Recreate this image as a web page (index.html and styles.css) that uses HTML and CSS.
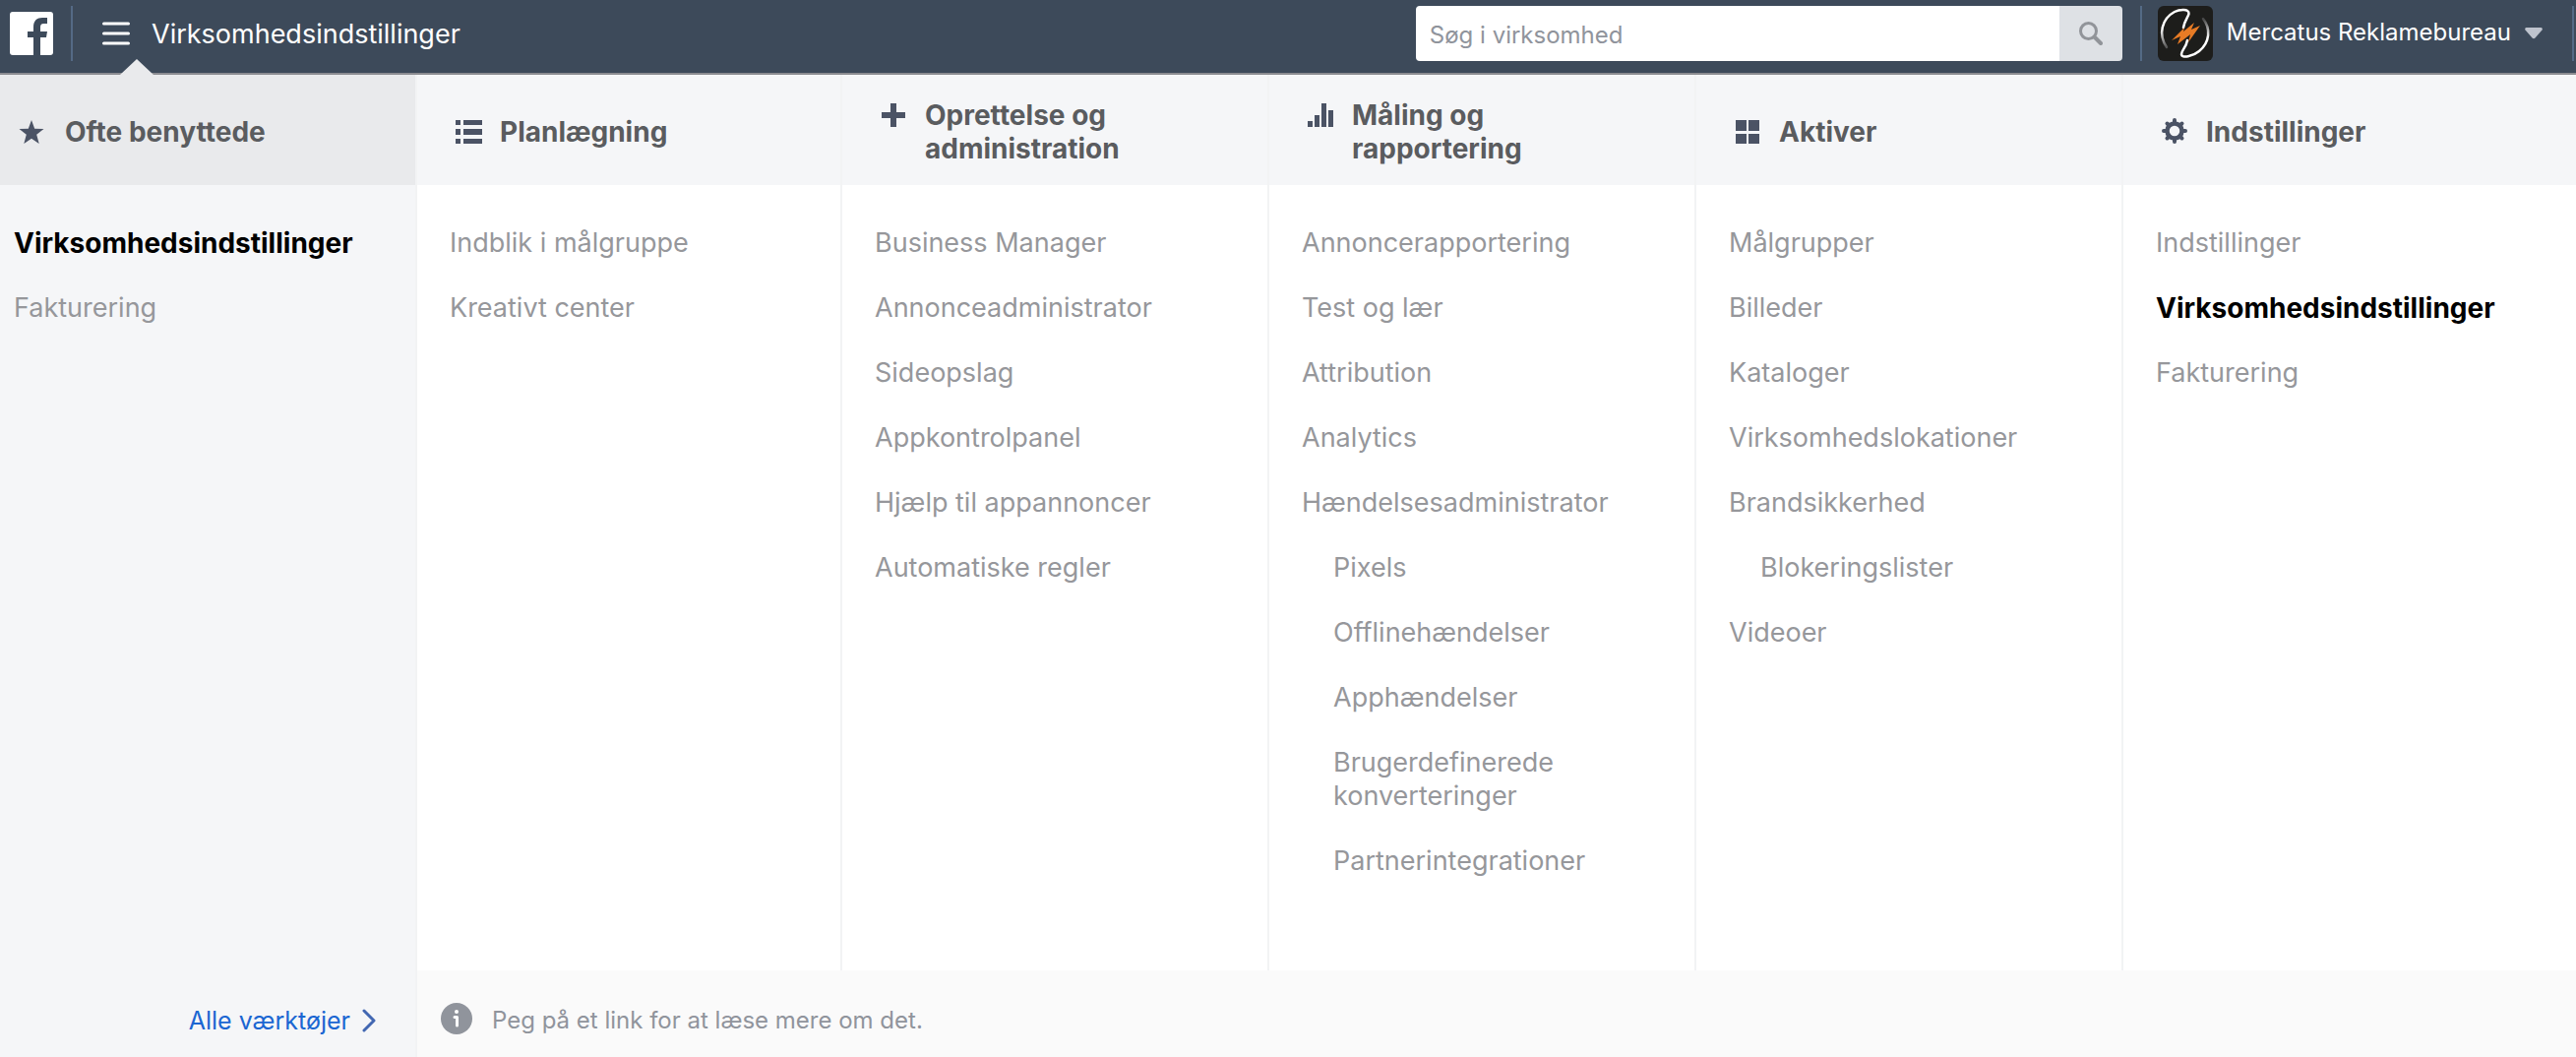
FILE: index.html
```html
<!DOCTYPE html>
<html lang="da">
<head>
    <meta charset="UTF-8" />
    <title>Virksomhedsindstillinger</title>
    <link rel="stylesheet" href="styles.css">
</head>
<body>

    <header class="topbar">
        <a href="#" class="logo" aria-label="Facebook">
            <svg width="44" height="44" viewBox="0 0 44 44">
                <rect width="44" height="44" rx="3" fill="#fff"/>
                <path d="M24 44V26h-6v-6h6v-4.500C24 9 27.500 6 33 6h5v6h-3.500c-2.800 0-3.500 1.400-3.500 3.700V20h7l-1 6h-6v18z" fill="#3d4a5a"/>
            </svg>
        </a>
        <button type="button" class="menu-button">
            <svg width="28" height="24" viewBox="0 0 28 24" stroke="#fff" stroke-width="3" stroke-linecap="round">
                <path d="M1.500 2h25M1.500 12h25M1.500 22h25"/>
            </svg>
            <span>Virksomhedsindstillinger</span>
        </button>

        <form class="search">
            <input type="text" placeholder="Søg i virksomhed" aria-label="Søg i virksomhed">
            <button type="button" aria-label="Søg">
                <svg width="24" height="24" viewBox="0 0 24 24" fill="none" stroke="#919499" stroke-linecap="round">
                    <circle cx="9.500" cy="9.500" r="8" stroke-width="3"/>
                    <path d="M16 16l6 6" stroke-width="4"/>
                </svg>
            </button>
        </form>

        <button type="button" class="account">
            <svg class="avatar" width="56" height="56" viewBox="0 0 56 56" fill="none" stroke-linecap="round">
                <defs>
                    <linearGradient id="fade-left" x1="0" y1="1" x2="0" y2="0">
                        <stop offset="0" stop-color="#555"/>
                        <stop offset=".5" stop-color="#fff"/>
                    </linearGradient>
                    <linearGradient id="fade-right" x1="0" y1="0" x2="0" y2="1">
                        <stop offset="0" stop-color="#444"/>
                        <stop offset=".5" stop-color="#fff"/>
                    </linearGradient>
                </defs>
                <rect width="56" height="56" rx="6" fill="#1d1d1b"/>
                <path d="M9 42C0 29 4 13 17 6c5-2.500 15-3.500 14.500 2C31 11 27 15 26 22" stroke="url(#fade-left)" stroke-width="2.500"/>
                <path d="M46 13c8 10 7 24-4 33-6 5-18 8-18 3 0-4 5-7 6-14" stroke="url(#fade-right)" stroke-width="2.500"/>
                <path d="M14 35l13-13-1 4 11-9-3 7 9-4-12 17 2-8-13 10 3-8z" fill="#e87b25"/>
            </svg>
            <span>Mercatus Reklamebureau</span>
            <svg width="18" height="12" viewBox="0 0 18 12"><path d="M1.500 0h15q2 .500 1 2.500l-7 8q-1.500 1.500-3 0l-7-8q-1-2 1-2.500z" fill="#bec3cd"/></svg>
        </button>
    </header>

    <main class="menu">
        <!-- Ofte benyttede -->
        <section class="column favorites">
            <h2>
                <svg width="32" height="28" viewBox="0 0 32 28"><path d="M14 2l3.200 8.700 9.300.400-7.300 5.700 2.500 9.200-7.700-5.300L6.300 26l2.500-9.200-7.300-5.700 9.300-.400z" fill="#4b5365"/></svg>
                <span>Ofte benyttede</span>
            </h2>
            <ul>
                <li><a href="#" class="active">Virksomhedsindstillinger</a></li>
                <li><a href="#">Fakturering</a></li>
            </ul>
            <a href="#" class="all-tools">
                <span>Alle værktøjer</span>
                <svg width="14" height="24" viewBox="0 0 14 24" fill="none" stroke="#4267b2" stroke-width="3" stroke-linecap="round" stroke-linejoin="round"><path d="M2 2l10 10L2 22"/></svg>
            </a>
        </section>

        <!-- Planlægning -->
        <section class="column">
            <h2>
                <svg width="32" height="28" viewBox="0 0 32 28" fill="#4b5365"><path d="M3 2h5v5H3zM11 2h19v5H11zM3 11h5v6H3zM11 11h19v6H11zM3 21h5v5H3zM11 21h19v5H11z"/></svg>
                <span>Planlægning</span>
            </h2>
            <ul>
                <li><a href="#">Indblik i målgruppe</a></li>
                <li><a href="#">Kreativt center</a></li>
            </ul>
        </section>

        <!-- Oprettelse og administration -->
        <section class="column">
            <h2>
                <svg width="32" height="28" viewBox="0 0 32 28" fill="#4b5365"><path d="M13 2h6v9h9v6h-9v9h-6v-9H4v-6h9z"/></svg>
                <span>Oprettelse og administration</span>
            </h2>
            <ul>
                <li><a href="#">Business Manager</a></li>
                <li><a href="#">Annonceadministrator</a></li>
                <li><a href="#">Sideopslag</a></li>
                <li><a href="#">Appkontrolpanel</a></li>
                <li><a href="#">Hjælp til appannoncer</a></li>
                <li><a href="#">Automatiske regler</a></li>
            </ul>
        </section>

        <!-- Måling og rapportering -->
        <section class="column">
            <h2>
                <svg width="32" height="28" viewBox="0 0 32 28" fill="#4b5365"><path d="M3 20h5v6H3zM10 14h5v12h-5zM17 2h5v24h-5zM24 9h5v17h-5z"/></svg>
                <span>Måling og rapportering</span>
            </h2>
            <ul>
                <li><a href="#">Annoncerapportering</a></li>
                <li><a href="#">Test og lær</a></li>
                <li><a href="#">Attribution</a></li>
                <li><a href="#">Analytics</a></li>
                <li><a href="#">Hændelsesadministrator</a></li>
                <li class="sub"><a href="#">Pixels</a></li>
                <li class="sub"><a href="#">Offlinehændelser</a></li>
                <li class="sub"><a href="#">Apphændelser</a></li>
                <li class="sub"><a href="#">Brugerdefinerede konverteringer</a></li>
                <li class="sub"><a href="#">Partnerintegrationer</a></li>
            </ul>
        </section>

        <!-- Aktiver -->
        <section class="column">
            <h2>
                <svg width="32" height="28" viewBox="0 0 32 28" fill="#4b5365"><path d="M4 2h11v11H4zM17 2h11v11H17zM4 16h11v10H4zM17 16h11v10H17z"/></svg>
                <span>Aktiver</span>
            </h2>
            <ul>
                <li><a href="#">Målgrupper</a></li>
                <li><a href="#">Billeder</a></li>
                <li><a href="#">Kataloger</a></li>
                <li><a href="#">Virksomhedslokationer</a></li>
                <li><a href="#">Brandsikkerhed</a></li>
                <li class="sub"><a href="#">Blokeringslister</a></li>
                <li><a href="#">Videoer</a></li>
            </ul>
        </section>

        <!-- Indstillinger -->
        <section class="column">
            <h2>
                <svg width="32" height="28" viewBox="0 0 32 28" fill="none" stroke="#4b5365">
                    <circle cx="16" cy="13" r="7.500" stroke-width="4.500"/>
                    <path d="M16 2v3M16 21v3M5 13h3M24 13h3M8.500 5.500l2 2M21.500 18.500l2 2M23.500 5.500l-2 2M10.500 18.500l-2 2" stroke-width="4" stroke-linecap="round"/>
                </svg>
                <span>Indstillinger</span>
            </h2>
            <ul>
                <li><a href="#">Indstillinger</a></li>
                <li><a href="#" class="active">Virksomhedsindstillinger</a></li>
                <li><a href="#">Fakturering</a></li>
            </ul>
        </section>

        <footer class="hint">
            <svg width="32" height="32" viewBox="0 0 32 32">
                <circle cx="16" cy="16" r="16" fill="#90949c"/>
                <circle cx="16" cy="9" r="2" fill="#fff"/>
                <path d="M14 14.500h2.500V23" fill="none" stroke="#fff" stroke-width="3" stroke-linecap="round" stroke-linejoin="round"/>
            </svg>
            <span>Peg på et link for at læse mere om det.</span>
        </footer>
    </main>

</body>
</html>
```

FILE: styles.css
```css
* {
    margin: 0;
    padding: 0;
    box-sizing: border-box;
    font-family: Inter, "Liberation Sans", sans-serif;
}

body {
    display: flex;
    flex-direction: column;
    min-height: 100vh;
    background-color: #fff;
    font-size: 27px;
    line-height: 34px;
}

a {
    text-decoration: none;
}

button {
    border: none;
    background: none;
    cursor: pointer;
}

svg {
    flex-shrink: 0;
}

/* Topbar */
.topbar {
    display: flex;
    height: 76px;
    padding: 6px 2px 12px 10px;
    background-color: #3d4a5a;
    border-bottom: 2px solid #8b8c91;
}

.logo {
    padding: 6px 18px 0 0;
    border-right: 2px solid #546a85;
}

.menu-button {
    position: relative;
    display: flex;
    align-items: center;
    gap: 22px;
    padding-left: 30px;
    color: #fff;
    font-size: 27px;
}

/* Pilen ned mod den åbne menu */
.menu-button::after {
    content: "";
    position: absolute;
    left: 48px;
    bottom: -14px;
    border: 17px solid transparent;
    border-top: none;
    border-bottom: 16px solid #e9eaec;
}

.search {
    display: flex;
    width: 718px;
    margin-left: auto;
    border-radius: 4px;
    overflow: hidden;
}

.search input {
    flex: 1;
    padding: 2px 14px 0;
    border: none;
    outline: none;
    font-size: 24px;
}

.search input::placeholder {
    color: #90949c;
}

.search button {
    display: flex;
    align-items: center;
    justify-content: center;
    width: 64px;
    background-color: #dee1e5;
}

.account {
    display: flex;
    align-items: center;
    margin-left: 18px;
    padding: 0 30px 0 16px;
    border-left: 2px solid #546a85;
    border-right: 2px solid #546a85;
    color: #fff;
    font-size: 24px;
}

.account span {
    margin: 0 14px;
    padding-bottom: 4px;
}

/* Menu */
.menu {
    flex: 1;
    display: grid;
    grid-template-columns: 424px 432fr 434fr 434fr 434fr 460fr;
    grid-template-rows: 1fr 88px;
}

.column {
    border-right: 2px solid #f2f3f4;
}

.column:nth-child(6) {
    border-right: none;
}

/* wrap + align-content centrerer, mens ikonet bliver ved første linje */
.column h2 {
    display: flex;
    flex-wrap: wrap;
    align-items: flex-start;
    align-content: center;
    gap: 16px;
    height: 112px;
    padding: 4px 60px 0 36px;
    background-color: #f5f6f8;
    color: #5a5c5f;
    font-size: 28px;
    font-weight: 700;
}

.column h2 svg {
    margin: 3px 0;
}

.column h2 span {
    flex: 1;
}

.column ul {
    list-style: none;
    padding: 42px 33px 62px;
}

.column li {
    margin-bottom: 32px;
}

.column li.sub {
    padding-left: 32px;
}

.column li a {
    display: block;
    color: #96979b;
}

.column li a.active {
    color: #000;
    font-size: 28px;
    font-weight: 700;
}

/* Venstre kolonne går helt ned forbi hintet */
.favorites {
    grid-row: span 2;
    display: flex;
    flex-direction: column;
    background-color: #f5f6f8;
}

.column.favorites h2 {
    padding-left: 18px;
    padding-right: 18px;
    background-color: #e9eaec;
}

.column.favorites ul {
    flex: 1;
    padding-left: 14px;
}

.all-tools {
    display: flex;
    align-items: center;
    justify-content: flex-end;
    gap: 12px;
    height: 88px;
    padding: 14px 40px 0 0;
    color: #1b66d2;
    font-size: 25px;
}

.hint {
    grid-column: 2 / -1;
    display: flex;
    align-items: center;
    gap: 20px;
    padding: 14px 24px 0;
    background-color: #fafafa;
    color: #90949c;
    font-size: 24px;
}

.hint svg {
    margin-bottom: 4px;
}
```
